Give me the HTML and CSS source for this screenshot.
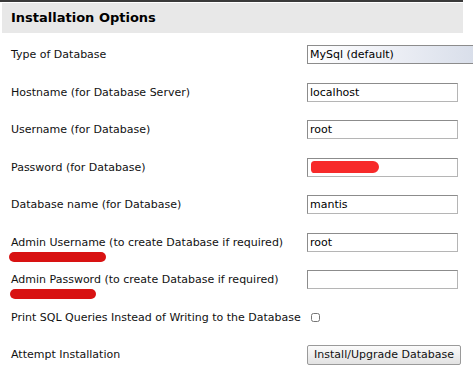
FILE: index.html
```html
<!DOCTYPE html>
<html lang="en">
<head>
    <meta charset="UTF-8">
    <title>Installation Options</title>
    <link rel="stylesheet" href="styles.css">
</head>
<body>
    <div class="panel">
        <h2 class="panel-title">Installation Options</h2>

        <div class="row">
            <span class="label">Type of Database</span>
            <select class="db-select">
                <option selected>MySql (default)</option>
                <option>PostgreSQL</option>
            </select>
        </div>

        <div class="row">
            <span class="label">Hostname (for Database Server)</span>
            <input type="text" class="field" value="localhost">
        </div>

        <div class="row">
            <span class="label">Username (for Database)</span>
            <input type="text" class="field" value="root">
        </div>

        <div class="row">
            <span class="label">Password (for Database)</span>
            <span class="field-wrap">
                <input type="text" class="field" value="">
                <span class="scribble"></span>
            </span>
        </div>

        <div class="row">
            <span class="label">Database name (for Database)</span>
            <input type="text" class="field" value="mantis">
        </div>

        <div class="row">
            <span class="label">Admin Username (to create Database if required)<span class="mark mark-user"></span></span>
            <input type="text" class="field" value="root">
        </div>

        <div class="row">
            <span class="label">Admin Password (to create Database if required)<span class="mark mark-pass"></span></span>
            <input type="text" class="field" value="">
        </div>

        <div class="row">
            <span class="label">Print SQL Queries Instead of Writing to the Database</span>
            <span><input type="checkbox" class="check"></span>
        </div>

        <div class="row">
            <span class="label">Attempt Installation</span>
            <span><button type="button" class="btn">Install/Upgrade Database</button></span>
        </div>
    </div>
</body>
</html>
```

FILE: styles.css
```css
body { margin: 0; font-family: "DejaVu Sans", Verdana, sans-serif; font-size: 11px; color: #111; background: #fff; overflow: hidden; }
.panel { width: 463px; border-top: 2px solid #3a3a3a; }
.panel-title { margin: 1px 0 0 2px; height: 30px; line-height: 30px; padding-left: 9px; background: #e8e8e8; font-size: 13px; font-weight: bold; color: #000; }
.row { display: grid; grid-template-columns: 296px 1fr; align-items: center; height: 37.5px; padding-left: 11px; }
.row:first-of-type { margin-top: 3px; }
.label { position: relative; white-space: nowrap; }
.field { box-sizing: border-box; width: 151px; height: 19px; margin: 0; padding: 0 2px; border: 1px solid #8c8c8c; border-bottom-color: #b5b5b5; border-right-color: #b5b5b5; font-family: "DejaVu Sans", Verdana, sans-serif; font-size: 11px; color: #000; background: #fff; outline: none; }
.field-wrap { position: relative; display: inline-block; width: 151px; height: 19px; }
.db-select { box-sizing: border-box; width: 175px; height: 19px; margin: 0; padding: 0 2px; border: 1px solid #8c8c8c; border-radius: 0; font-family: "DejaVu Sans", Verdana, sans-serif; font-size: 11px; color: #000; appearance: none; background: linear-gradient(to right, #ffffff 0%, #eef0f6 45%, #d7dde9 100%); }
.scribble { position: absolute; left: 4px; top: 3px; width: 68px; height: 12px; border-radius: 6px 10px 10px 6px; background: #f72a2a; }
.mark { position: absolute; height: 10px; border-radius: 5px; background: #d81212; }
.mark-user { left: -2px; top: 16px; width: 97px; }
.mark-pass { left: -1px; top: 16px; width: 86px; }
.check { width: 9px; height: 9px; margin: 0 0 0 4px; vertical-align: middle; }
.btn { box-sizing: border-box; width: 154px; height: 20px; margin: 0; padding: 0 6px; border: 1px solid #9a9a9a; border-radius: 2px; font-family: "DejaVu Sans", Verdana, sans-serif; font-size: 11px; color: #111; background: linear-gradient(#fbfbfb, #e2e2e2); }
```
